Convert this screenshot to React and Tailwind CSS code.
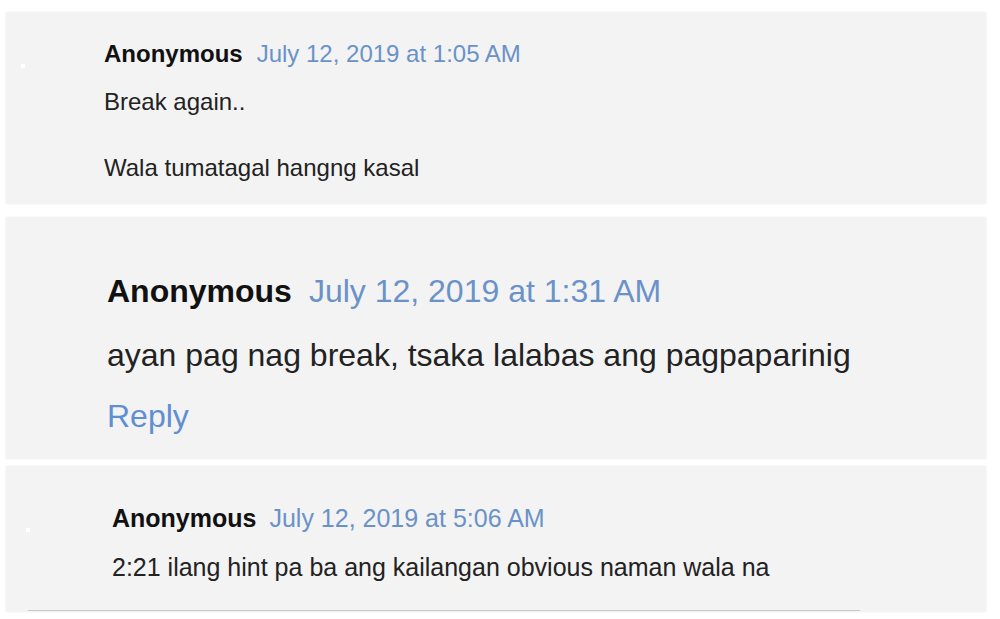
const font = { fontFamily: '"Liberation Sans", Arial, sans-serif' };

const Comment = ({ dotTop, dotLeft, children, className }) => (
  <div className={`flex items-start w-[980px] bg-[#f3f3f3] shadow-[0_0_2px_rgba(0,0,0,0.08)] ${className}`}>
    {dotTop != null ? (
      <div className="w-[4px] h-[4px] bg-white shrink-0" style={{ marginTop: dotTop, marginLeft: dotLeft }} />
    ) : null}
    {children}
  </div>
);

export default function App() {
  return (
    <div className="min-h-screen bg-white pt-[12px] pl-[6px] flex flex-col" style={font}>
      {/* first comment */}
      <Comment dotTop={52} dotLeft={15} className="h-[192px]">
        <div className="ml-[79px] pt-[28px] text-[24px] leading-[28px]">
          <div className="flex gap-[14px]">
            <span className="font-bold text-[#111]">Anonymous</span>
            <a className="text-[#6a92c8]">July 12, 2019 at 1:05 AM</a>
          </div>
          <p className="mt-[20px] text-[#222]">Break again..</p>
          <p className="mt-[38px] text-[#222]">Wala tumatagal hangng kasal</p>
        </div>
      </Comment>

      {/* second comment */}
      <Comment className="h-[242px] mt-[13px]">
        <div className="ml-[101px] pt-[56px] text-[32px] leading-[36px]">
          <div className="flex gap-[17px]">
            <span className="font-bold text-[#111]">Anonymous</span>
            <a className="text-[#6a92c8]">July 12, 2019 at 1:31 AM</a>
          </div>
          <p className="mt-[28px] text-[#222]">ayan pag nag break, tsaka lalabas ang pagpaparinig</p>
          <a className="block mt-[25px] text-[#5f8fd2]">Reply</a>
        </div>
      </Comment>

      {/* third comment */}
      <Comment dotTop={62} dotLeft={20} className="h-[146px] mt-[7px] relative">
        <div className="ml-[82px] pt-[38px] text-[25px] leading-[28px]">
          <div className="flex gap-[13px]">
            <span className="font-bold text-[#111]">Anonymous</span>
            <a className="text-[#6a92c8]">July 12, 2019 at 5:06 AM</a>
          </div>
          <p className="mt-[21px] text-[#222]">2:21 ilang hint pa ba ang kailangan obvious naman wala na</p>
        </div>
        <div className="absolute left-[22px] bottom-[1px] w-[832px] h-px bg-[#c9c9c9]" />
      </Comment>
    </div>
  );
}
